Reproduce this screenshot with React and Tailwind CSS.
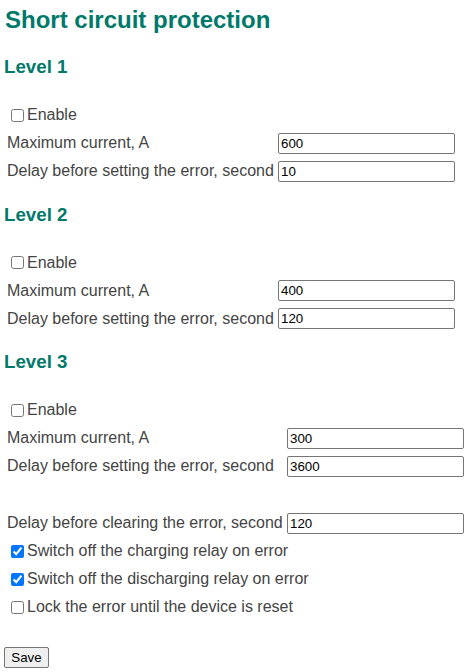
import React from "react";

const font = { fontFamily: '"Liberation Sans", Arial, sans-serif' };

function Check({ label, checked }) {
  return (
    <label className="flex items-center h-[28px] pl-[7px] gap-[3px] text-[16px] leading-[18px] text-[#444]">
      <input type="checkbox" defaultChecked={checked} className="m-0 w-[13px] h-[13px] accent-[#0075ff]" />
      <span>{label}</span>
    </label>
  );
}

function Field({ label, value, labelW }) {
  return (
    <div className="flex items-center h-[28px]">
      <div className={`${labelW} pl-[3px] text-[16px] leading-[18px] text-[#444] whitespace-nowrap`}>{label}</div>
      <input
        type="text"
        defaultValue={value}
        className="w-[177px] h-[21px] border border-[#767676] rounded-[2px] px-[2px] text-[13.33px] text-black bg-white outline-none"
      />
    </div>
  );
}

function Level({ n, max, delay, labelW }) {
  return (
    <div>
      <h3 className="text-[18.72px] leading-[22px] font-bold text-[#00796b]">Level {n}</h3>
      <div className="mt-[23px]">
        <Check label="Enable" />
        <Field label="Maximum current, A" value={max} labelW={labelW} />
        <Field label="Delay before setting the error, second" value={delay} labelW={labelW} />
      </div>
    </div>
  );
}

export default function App() {
  return (
    <div className="bg-white w-[472px] h-[672px] pl-[4px] pt-[6px]" style={font}>
      <h2 className="text-[24px] leading-[27px] font-bold text-[#00796b] pl-[1px]">Short circuit protection</h2>
      <div className="mt-[23px] flex flex-col gap-[18.5px]">
        <Level n={1} max="600" delay="10" labelW="w-[274px]" />
        <Level n={2} max="400" delay="120" labelW="w-[274px]" />
        <Level n={3} max="300" delay="3600" labelW="w-[283px]" />
      </div>
      <div className="mt-[29px]">
        <Field label="Delay before clearing the error, second" value="120" labelW="w-[283px]" />
        <Check label="Switch off the charging relay on error" checked />
        <Check label="Switch off the discharging relay on error" checked />
        <Check label="Lock the error until the device is reset" />
      </div>
      <button className="mt-[26px] w-[45px] h-[21px] bg-[#efefef] border border-[#767676] rounded-[2px] text-[13.33px] text-black leading-none">
        Save
      </button>
    </div>
  );
}
